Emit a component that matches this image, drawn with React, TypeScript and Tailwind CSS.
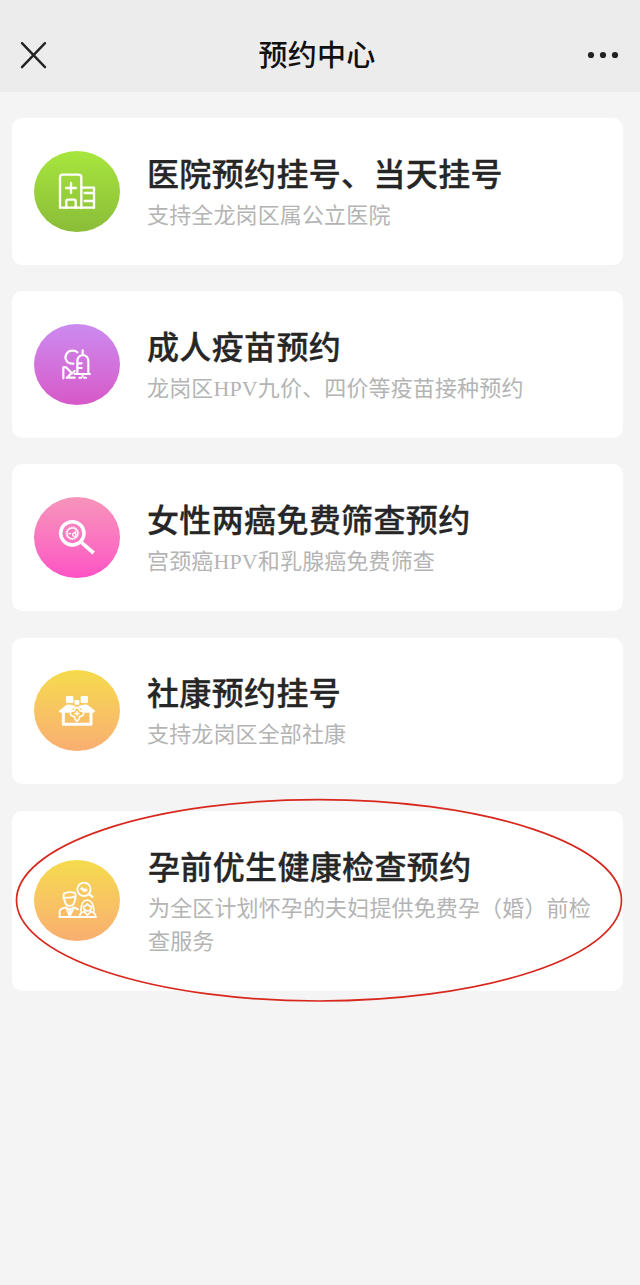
import React from "react";

interface Service {
  title: string;
  description: string;
  gradient: string;
  viewBox: string;
  icon: React.ReactNode;
}

const HospitalIcon = () => (
  <g strokeWidth="7">
    <path d="M102 200V110q0-8 8-8h48q8 0 8 8v92M102 201h102" />
    <path d="M166 141h38v60M176 157h27M176 181h27" />
    <path d="M135 127v30M120 142h30" />
    <path d="M121 201v-20q0-4 4-4h20q4 0 4 4v20" />
  </g>
);

const VaccineIcon = () => (
  <g strokeWidth="6.5">
    <path d="M154 112Q148 106 139 107A20 20 0 0 0 122 138Q127 146 142 146" />
    <path d="M112 190v-33q9-2 13 5l13 13 8-7M122 188h24M124 187l12-12" />
    <path d="M154 176v-36q0-18 17-20 16 2 16 20v36M146 177h46M170 106v14" />
    <path d="M155 145h12M155 159h12" />
    <path d="M160 188h6M174 188h6M170 179v5" strokeWidth="6" />
  </g>
);

const ScreeningIcon = () => (
  <g>
    <circle cx="139" cy="136" r="35" strokeWidth="10.5" />
    <circle cx="139" cy="136" r="16" strokeWidth="4" />
    <circle cx="139" cy="136" r="19" strokeWidth="3" strokeDasharray="2 5" />
    <circle cx="145" cy="140" r="5" strokeWidth="4" />
    <path d="M129 137h5M148 130v5" strokeWidth="4" />
    <path d="M166 163l37 32" strokeWidth="11" strokeLinecap="butt" />
  </g>
);

const CommunityIcon = () => (
  <g>
    <g fill="white" stroke="none">
      <rect x="120" y="108" width="22" height="21" rx="4" />
      <rect x="164" y="108" width="22" height="21" rx="4" />
      <rect x="145" y="120" width="15" height="14" rx="3" />
      <path d="M98 153l24-19q17-3 31 7 14-10 31-7l24 19-5 5H103z" />
    </g>
    <path d="M112 153v40h83v-40" strokeWidth="9" />
    <path
      d="M153 139l11 9 11 12-11 11-11 13-11-13-11-11 11-12z"
      fill="#f9c45c"
      stroke="#f9c45c"
      strokeWidth="4"
    />
    <path
      d="M153 143q8 0 8 9 12 0 12 8t-12 10q-2 10-8 14-6-4-8-14-12-2-12-10t12-8q0-9 8-9z"
      strokeWidth="5"
    />
    <path d="M153 155v11M147 160.500h12" strokeWidth="5" />
  </g>
);

const CoupleIcon = () => (
  <g strokeWidth="5.5">
    <path d="M114 149q-5-20 5-19 10-5 26-1 6 2 3 20M115 143q18 3 32-3" />
    <path d="M115 147q1 21 16 22 15-1 16-22" />
    <path d="M101 201v-17q3-8 18-11l12 7 13-7 12 6M100 202h110" />
    <path d="M121 175l10 25 12-25M132 182v18" />
    <circle cx="174" cy="119" r="20" />
    <path d="M188 133l11 8" strokeWidth="7" />
    <path d="M164 117q1-6 7-2l5 4q8-4 7 3-2 5-7 4-8-2-12-9z" fill="white" strokeWidth="3" />
    <g strokeWidth="5">
      <path d="M165 184q-1-32 19-33 18 2 20 33" />
      <path d="M172 171q8-2 12-8 5 7 13 8-1 12-12 13-12-1-13-13z" />
      <path d="M161 200q1-12 13-14l10 10 11-10q12 2 14 14" />
    </g>
  </g>
);

const services: Service[] = [
  {
    title: "医院预约挂号、当天挂号",
    description: "支持全龙岗区属公立医院",
    gradient: "from-[#a7e63e] to-[#8bbd38]",
    viewBox: "24 31 258 243",
    icon: <HospitalIcon />,
  },
  {
    title: "成人疫苗预约",
    description: "龙岗区HPV九价、四价等疫苗接种预约",
    gradient: "from-[#cb8af0] to-[#d658c8]",
    viewBox: "24 27 258 243",
    icon: <VaccineIcon />,
  },
  {
    title: "女性两癌免费筛查预约",
    description: "宫颈癌HPV和乳腺癌免费筛查",
    gradient: "from-[#f694ba] to-[#fd52c4]",
    viewBox: "24 27 258 243",
    icon: <ScreeningIcon />,
  },
  {
    title: "社康预约挂号",
    description: "支持龙岗区全部社康",
    gradient: "from-[#f5db4c] to-[#f9ae70]",
    viewBox: "24 30 258 243",
    icon: <CommunityIcon />,
  },
  {
    title: "孕前优生健康检查预约",
    description: "为全区计划怀孕的夫妇提供免费孕（婚）前检查服务",
    gradient: "from-[#f5db4c] to-[#f9ae70]",
    viewBox: "24 31 258 243",
    icon: <CoupleIcon />,
  },
];

const Header = () => (
  <header className="flex h-[92px] items-center justify-between bg-[#ececec] pt-[18px] pr-[21px] pl-[20px]">
    <svg width="27" height="28" viewBox="0 0 27 28" fill="none" stroke="#222" strokeWidth="2.4" strokeLinecap="round">
      <path d="M2 2.2l23 24M25 2.2l-23 24" />
    </svg>
    <h1 className="pb-[4px] text-[29px] leading-none font-medium tracking-[0.3px] text-[#111]">预约中心</h1>
    <svg width="32" height="8" viewBox="0 0 32 8" fill="#222">
      <circle cx="4" cy="4" r="3.1" />
      <circle cx="16" cy="4" r="3.1" />
      <circle cx="28" cy="4" r="3.1" />
    </svg>
  </header>
);

const ServiceCard: React.FC<{ service: Service; highlighted?: boolean }> = ({ service, highlighted }) => (
  <div
    className={`relative flex items-center rounded-[10px] bg-white pl-[22px] ${
      highlighted ? "h-[180px] pb-px" : "h-[146.5px]"
    }`}
  >
    <div className={`h-[81px] w-[86px] shrink-0 rounded-[50%] bg-linear-to-b ${service.gradient}`}>
      <svg
        className="h-full w-full"
        viewBox={service.viewBox}
        fill="none"
        stroke="white"
        strokeLinecap="round"
        strokeLinejoin="round"
      >
        {service.icon}
      </svg>
    </div>
    <div className={highlighted ? "w-[474px] pb-[2px] pl-[28px]" : "pb-[3px] pl-[27px]"}>
      <h2 className="mb-[3px] text-[32px] leading-[48px] font-medium tracking-[0.35px] text-[#262626] [-webkit-text-stroke:0.3px_#262626]">
        {service.title}
      </h2>
      <p className="font-['Liberation_Serif','Noto_Sans_CJK_SC',serif] text-[22px] leading-[33px] tracking-[0.14px] text-[#b4b4b4]">
        {service.description}
      </p>
    </div>
    {highlighted && (
      <svg
        className="pointer-events-none absolute -top-[13px] left-[3px]"
        width="608"
        height="204"
        viewBox="0 0 608 204"
        fill="none"
      >
        <ellipse cx="304" cy="102.3" rx="302.5" ry="100.7" stroke="#d8281e" strokeWidth="1.7" />
      </svg>
    )}
  </div>
);

export default function App() {
  return (
    <div className="min-h-[1285px] w-[640px] bg-[#f4f4f4] font-['Noto_Sans_CJK_SC',sans-serif]">
      <Header />
      <main className="flex flex-col gap-[26.7px] pt-[26px] pr-[17px] pl-[12px]">
        {services.map((service, index) => (
          <ServiceCard key={service.title} service={service} highlighted={index === services.length - 1} />
        ))}
      </main>
    </div>
  );
}
